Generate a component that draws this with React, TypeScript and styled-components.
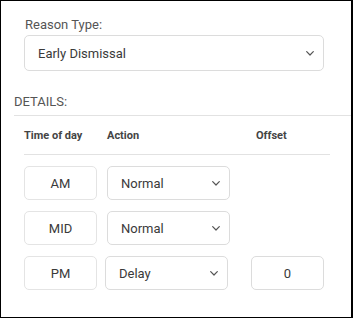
import React from 'react';
import styled, { createGlobalStyle } from 'styled-components';

const GlobalStyle = createGlobalStyle`
    body {
        margin: 0;
        background: #ffffff;
        font-family: Roboto, "Liberation Sans", sans-serif;
    }
`;

type Row = { time: string; action: string; offset?: string; shift?: boolean };

const rows: Row[] = [
    { time: 'AM', action: 'Normal' },
    { time: 'MID', action: 'Normal' },
    { time: 'PM', action: 'Delay', offset: '0', shift: true },
];

const Chevron = () => (
    <svg width="8" height="5" viewBox="0 0 8 5" fill="none">
        <polyline
            points="0.7,0.7 4,4 7.3,0.7"
            stroke="#555"
            strokeWidth="1.2"
            strokeLinecap="round"
            strokeLinejoin="round"
        />
    </svg>
);

const Dropdown = ({ value, width, height }: { value: string; width: number; height: number }) => (
    <SelectBox $width={width} $height={height}>
        <SelectValue>{value}</SelectValue>
        <Chevron />
    </SelectBox>
);

const App = () => {
    return (
        <>
            <GlobalStyle />
            <Frame>
                <ReasonField>
                    <FieldLabel>Reason Type:</FieldLabel>
                    <Dropdown value="Early Dismissal" width={300} height={36} />
                </ReasonField>

                <DetailsTitle>DETAILS:</DetailsTitle>

                <Table>
                    <HeaderRow>
                        <HeaderCell>Time of day</HeaderCell>
                        <HeaderCell>Action</HeaderCell>
                        <HeaderCell $indent={5}>Offset</HeaderCell>
                    </HeaderRow>
                    {rows.map((row) => (
                        <DataRow key={row.time}>
                            <TimeBox>{row.time}</TimeBox>
                            <ActionCell $shift={row.shift}>
                                <Dropdown value={row.action} width={123} height={34} />
                            </ActionCell>
                            {row.offset !== undefined && <OffsetBox>{row.offset}</OffsetBox>}
                        </DataRow>
                    ))}
                </Table>
            </Frame>
        </>
    );
};

export default App;

const Frame = styled.div`
    width: 353px;
    height: 318px;
    box-sizing: border-box;
    border: 1px solid #000;
    border-right-width: 2px;
    background: #fff;
    overflow: hidden;
`;

const ReasonField = styled.div`
    padding: 16px 0 0 23px;
`;

const FieldLabel = styled.label`
    display: block;
    margin-left: 1px;
    margin-bottom: 3px;
    font-size: 13px;
    line-height: 15px;
    color: #555;
`;

const SelectBox = styled.div<{ $width: number; $height: number }>`
    width: ${(p) => p.$width}px;
    height: ${(p) => p.$height}px;
    box-sizing: border-box;
    border: 1px solid #dcdcdc;
    border-radius: 5px;
    display: flex;
    align-items: center;
    justify-content: space-between;
    padding: 0 9px 0 13px;
    background: #fff;
`;

const SelectValue = styled.span`
    font-size: 13px;
    color: #3a3a3a;
`;

const DetailsTitle = styled.div`
    margin: 23px 0 0 13px;
    padding-bottom: 6px;
    border-bottom: 1px solid #e2e2e2;
    font-size: 13px;
    line-height: 15px;
    color: #555;
`;

const Table = styled.div`
    margin-left: 23px;
    width: 306px;
`;

const HeaderRow = styled.div`
    display: grid;
    grid-template-columns: 83px 144px 1fr;
    align-items: center;
    height: 38px;
    border-bottom: 1px solid #e2e2e2;
`;

const HeaderCell = styled.div<{ $indent?: number }>`
    padding-left: ${(p) => p.$indent ?? 0}px;
    font-size: 11px;
    font-weight: 700;
    color: #444;
`;

const DataRow = styled.div`
    display: grid;
    grid-template-columns: 83px 144px 73px;
    align-items: center;
    margin-top: 11px;
`;

const TimeBox = styled.div`
    width: 73px;
    height: 34px;
    box-sizing: border-box;
    border: 1px solid #e4e4e4;
    border-radius: 5px;
    display: flex;
    align-items: center;
    justify-content: center;
    font-size: 13px;
    color: #3a3a3a;
`;

const ActionCell = styled.div<{ $shift?: boolean }>`
    margin-left: ${(p) => (p.$shift ? -2 : 0)}px;
`;

const OffsetBox = styled(TimeBox)`
    border-color: #dcdcdc;
`;
